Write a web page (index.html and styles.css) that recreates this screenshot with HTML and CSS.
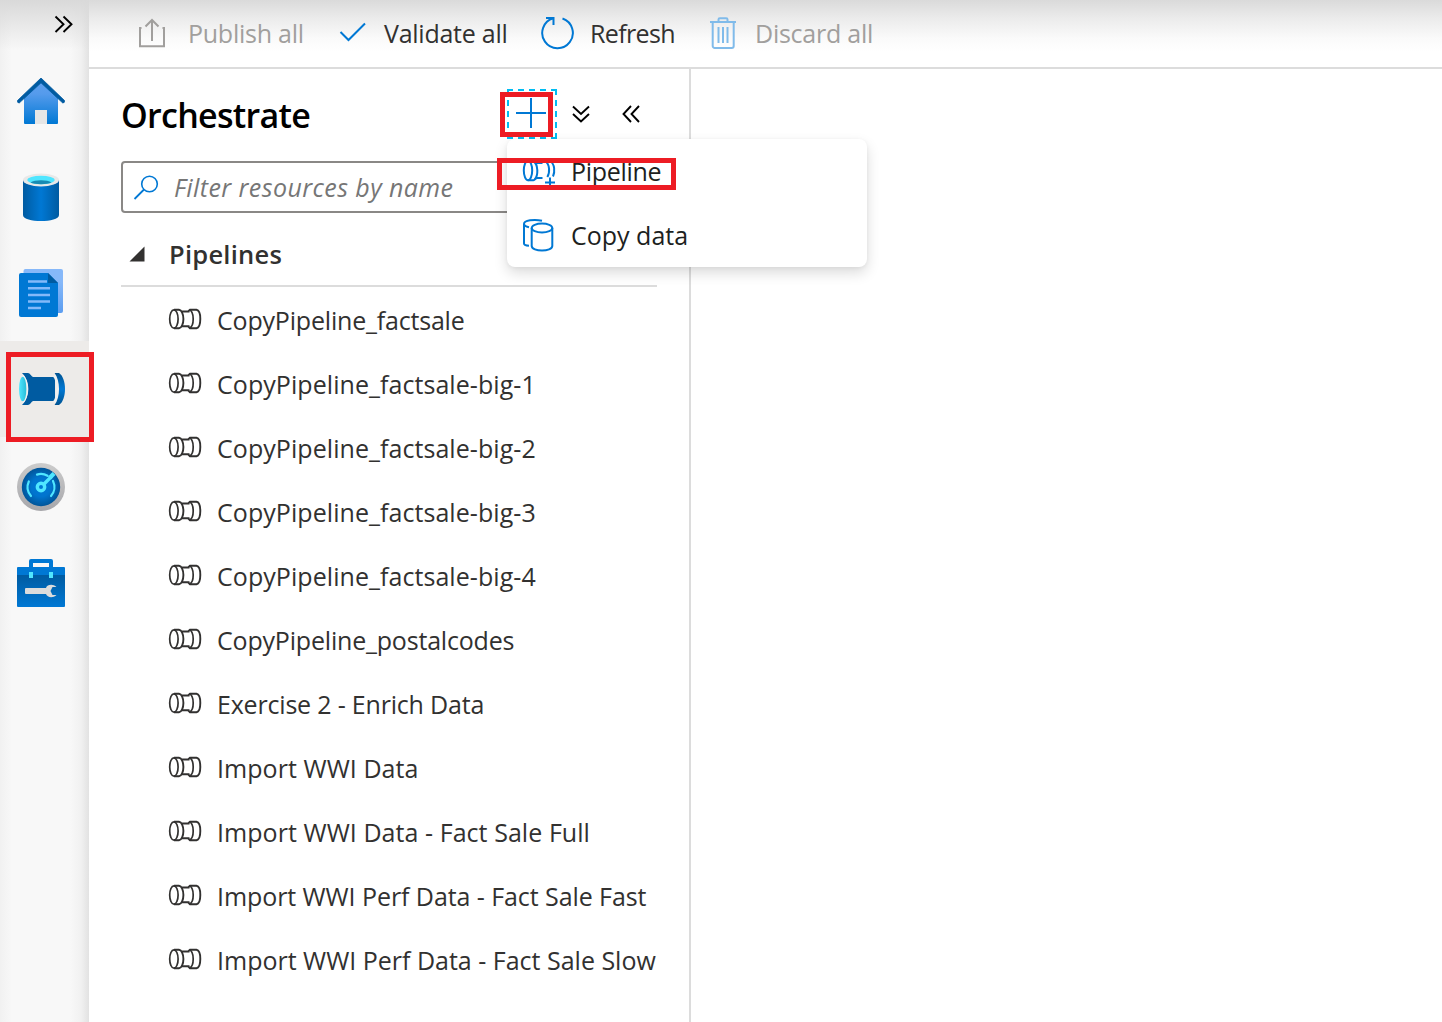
FILE: index.html
```html
<!DOCTYPE html>
<html lang="en">
<head>
<meta charset="utf-8">
<title>Orchestrate</title>
<link rel="stylesheet" href="styles.css">
</head>
<body>
<svg width="0" height="0" class="defs">
  <defs>
    <linearGradient id="house" x1="0" y1="0" x2="0" y2="1"><stop offset="0" stop-color="#5ea0ef"/><stop offset=".3" stop-color="#559bec"/><stop offset="1" stop-color="#0078d4"/></linearGradient>
    <linearGradient id="drum"><stop offset="0" stop-color="#005ba1"/><stop offset=".5" stop-color="#0078d4"/><stop offset="1" stop-color="#005ba1"/></linearGradient>
    <linearGradient id="page" x1="0" y1="0" x2="0" y2="1"><stop offset=".3" stop-color="#86b8f9"/><stop offset="1" stop-color="#5b9df0"/></linearGradient>
    <linearGradient id="ring" x1="0" y1="0" x2="0" y2="1"><stop offset="0" stop-color="#ccc"/><stop offset="1" stop-color="#a6a6aa"/></linearGradient>
    <radialGradient id="dial"><stop offset="0" stop-color="#0078d4"/><stop offset=".5" stop-color="#0074ce"/><stop offset="1" stop-color="#005599"/></radialGradient>
    <linearGradient id="box" x1="0" y1="0" x2="0" y2="1"><stop offset="0" stop-color="#005ba1"/><stop offset="1" stop-color="#0078d4"/></linearGradient>
    <linearGradient id="mouth" x1="0" y1="0" x2="1" y2="0"><stop offset="0" stop-color="#50e6ff"/><stop offset="1" stop-color="#27bdd9"/></linearGradient>
    <linearGradient id="rim" x1="0" y1="0" x2="0" y2="1"><stop offset="0" stop-color="#005392"/><stop offset=".5" stop-color="#0078d4"/><stop offset="1" stop-color="#005392"/></linearGradient>
    <symbol id="pipe" viewBox="0 0 34 22">
      <g fill="none" stroke="currentColor" stroke-width="1.700">
        <ellipse cx="5.900" cy="11" rx="4.200" ry="9.200"/>
        <path d="M6 1.800H11C13.500 2 15.400 6 15.400 11S13.500 20 11 20.200H6" stroke-width="1.900"/>
        <path d="M13.500 3.500H21.500M13.500 18.300H21.500M20 3.500L22 1.800H28.500C31 2.200 32.300 6 32.300 11S31 19.800 28.500 20.200H22L20 18.300" stroke-width="1.900"/>
        <path d="M21.500 1.800C24 3 25.200 7 25.200 11S24 19 21.500 20.200"/>
      </g>
    </symbol>
  </defs>
</svg>
<div class="app">
  <nav class="rail">
    <button class="expand"><svg width="20" height="18" viewBox="0 0 20 18"><path d="M1.500 1.500L9.500 9.300L1.500 17M9.500 1.500L17.500 9.300L9.500 17" fill="none" stroke="#000" stroke-width="1.900"/></svg></button>
    <a class="rail-item home"><svg width="48" height="48" viewBox="0 0 48 48"><path d="M24 3L41 20V45a1 1 0 0 1-1 1H8a1 1 0 0 1-1-1V20z" fill="url(#house)"/><path d="M18 46V32h12v14z" fill="#e6e6e6"/><path d="M0.500 22.500L24 0L47.500 22.500a1.500 1.500 0 0 1-2.800 1.500L24 4.800L3.300 24A1.500 1.500 0 0 1 .5 22.500z" fill="#005ba1" stroke="#005ba1" stroke-width=".8"/></svg></a>
    <a class="rail-item"><svg width="48" height="48" viewBox="0 0 48 48"><path d="M6 7v35c0 8 36 8 36 0V7z" fill="url(#drum)"/><ellipse cx="24" cy="7" rx="18" ry="6.500" fill="#e8e8e8"/><ellipse cx="24" cy="7" rx="13.700" ry="4.200" fill="#50e6ff"/><path d="M13.500 9.500c4-3 17-3 21 0c-4 2.300-17 2.300-21 0z" fill="#198ab3"/></svg></a>
    <a class="rail-item"><svg width="48" height="48" viewBox="0 0 48 48"><rect x="6.500" y="0" width="39.500" height="44" rx="2" fill="url(#page)"/><path d="M4 4H31L41 14V46a2 2 0 0 1-2 2H4a2 2 0 0 1-2-2V6a2 2 0 0 1 2-2z" fill="#0078d4"/><path d="M31 4V14H41z" fill="#005ba1"/><path d="M11 12.500h19M11 19.200h22M11 26h22M11 32.500h22M11 39h13" stroke="#83b9f9" stroke-width="2.400"/></svg></a>
    <a class="rail-item active"><svg width="48" height="48" viewBox="0 0 48 48"><path d="M5 8h6c2 0 3 3 5 4h22V36H16C14 37 13 40 11 40H5C13.500 32 13.500 16 5 8z" fill="#005ba1"/><path d="M5.500 10.500C11.300 16 11.300 32 5.500 37.500" fill="none" stroke="#f2f2f2" stroke-width="2"/><ellipse cx="5.700" cy="24" rx="3.700" ry="12.200" fill="url(#mouth)"/><path d="M36 11.500C40.500 16 40.500 32 36 36.500L40 39C46 32 46 16 40 9z" fill="#f0f0f0"/><path d="M37.600 8h4.400c8 5 8 27 0 32h-4.400C43.500 32 43.500 16 37.600 8z" fill="url(#rim)"/></svg></a>
    <a class="rail-item low"><svg width="48" height="48" viewBox="0 0 48 48"><circle cx="24" cy="24" r="24" fill="url(#ring)"/><circle cx="24" cy="24" r="19.200" fill="url(#dial)"/><g fill="none" stroke="#50e6ff" stroke-width="2.200" stroke-linecap="round"><path d="M14 33A13.600 13.600 0 0 1 11.800 18.500M20 11.600A13 13 0 0 1 30.500 12.800M36 18A13.600 13.600 0 0 1 34 33"/><circle cx="24" cy="24" r="3.700" stroke-width="3.400"/><path d="M27 21L34 14" stroke-width="3.400"/></g><path d="M31 13.500l4.500-4.500 3 3-4.500 4.500z" fill="#50e6ff"/></svg></a>
    <a class="rail-item low"><svg width="48" height="48" viewBox="0 0 48 48"><path d="M14 9V2h20v7" fill="none" stroke="#0078d4" stroke-width="4" stroke-linejoin="round"/><path d="M0 9a1 1 0 0 1 1-1h46a1 1 0 0 1 1 1v8H0z" fill="#0078d4"/><path d="M0 16h48v31a1 1 0 0 1-1 1H1a1 1 0 0 1-1-1z" fill="url(#box)"/><path d="M12 13h4v6h-4zM32 13h4v6h-4z" fill="#50e6ff"/><path d="M9 29h20c1-3.500 7-4.500 10.500-1h-4L33.500 32l2 4h4C36 39.500 30 38.500 29 35H9a1 1 0 0 1-1-1v-4a1 1 0 0 1 1-1z" fill="#dcdcdc"/></svg></a>
  </nav>
  <div class="main">
    <header class="toolbar">
      <button class="cmd publish disabled"><svg width="30" height="34" viewBox="0 0 30 34"><path d="M4.500 12H3V30.200H27V12h-1.500M15 25V4.500M8.500 10.500L15 4L21.500 10.500" fill="none" stroke="#a19f9d" stroke-width="2"/></svg><span>Publish all</span></button>
      <button class="cmd validate"><svg width="28" height="34" viewBox="0 0 28 34"><path d="M1.500 16L9.500 24L26 7.500" fill="none" stroke="#0078d4" stroke-width="2"/></svg><span>Validate all</span></button>
      <button class="cmd refresh"><svg width="34" height="34" viewBox="0 0 34 34"><path d="M12.200 2.300A15.300 15.300 0 1 0 21.500 2.500M5 2H12.500V9" fill="none" stroke="#0078d4" stroke-width="2"/></svg><span>Refresh</span></button>
      <button class="cmd discard disabled"><svg width="28" height="34" viewBox="0 0 28 34"><path d="M1 6H27M9.500 5.500V3.500a1.300 1.300 0 0 1 1.300-1.300h6.400A1.300 1.300 0 0 1 18.500 3.500v2M3.700 6V30a2 2 0 0 0 2 2h17a2 2 0 0 0 2-2V6M9.500 11V27M14 11V27M18.500 11V27" fill="none" stroke="#80bbea" stroke-width="2"/></svg><span>Discard all</span></button>
    </header>
    <div class="workspace">
      <section class="panel">
        <div class="panel-head">
          <h1>Orchestrate</h1>
          <div class="tools">
            <button class="tool add"><svg width="30" height="30" viewBox="0 0 30 30"><path d="M15 0V30M0 15H30" stroke="#0078d4" stroke-width="2"/></svg></button>
            <button class="tool"><svg width="18" height="18" viewBox="0 0 18 18"><path d="M1 1.500L9 9L17 1.500M1 9L9 16.500L17 9" fill="none" stroke="#000" stroke-width="1.900"/></svg></button>
            <button class="tool"><svg width="18" height="18" viewBox="0 0 18 18"><path d="M9 1L1.500 9L9 17M17 1L9.500 9L17 17" fill="none" stroke="#000" stroke-width="1.900"/></svg></button>
          </div>
        </div>
        <div class="search"><svg width="26" height="26" viewBox="0 0 26 26"><circle cx="16.500" cy="10" r="7.800" fill="none" stroke="#0078d4" stroke-width="1.600"/><path d="M11 15.500L1.500 25" stroke="#0078d4" stroke-width="1.800"/></svg><span>Filter resources by name</span></div>
        <div class="group"><svg width="16" height="16" viewBox="0 0 16 16"><path d="M15.500 .5V15.500H.5z" fill="#323130"/></svg><h2>Pipelines</h2></div>
        <ul class="list">
          <li class="tight"><svg class="pipe"><use href="#pipe"/></svg><span>CopyPipeline_factsale</span></li>
          <li class="numbered"><svg class="pipe"><use href="#pipe"/></svg><span>CopyPipeline_factsale-big-1</span></li>
          <li class="numbered"><svg class="pipe"><use href="#pipe"/></svg><span>CopyPipeline_factsale-big-2</span></li>
          <li class="numbered"><svg class="pipe"><use href="#pipe"/></svg><span>CopyPipeline_factsale-big-3</span></li>
          <li class="numbered"><svg class="pipe"><use href="#pipe"/></svg><span>CopyPipeline_factsale-big-4</span></li>
          <li class="tight"><svg class="pipe"><use href="#pipe"/></svg><span>CopyPipeline_postalcodes</span></li>
          <li class="tight"><svg class="pipe"><use href="#pipe"/></svg><span>Exercise 2 - Enrich Data</span></li>
          <li class="numbered"><svg class="pipe"><use href="#pipe"/></svg><span>Import WWI Data</span></li>
          <li class="numbered"><svg class="pipe"><use href="#pipe"/></svg><span>Import WWI Data - Fact Sale Full</span></li>
          <li class="long"><svg class="pipe"><use href="#pipe"/></svg><span>Import WWI Perf Data - Fact Sale Fast</span></li>
          <li><svg class="pipe"><use href="#pipe"/></svg><span>Import WWI Perf Data - Fact Sale Slow</span></li>
        </ul>
      </section>
      <main class="canvas"></main>
    </div>
  </div>
</div>
<div class="menu">
  <div class="menu-item new-pipeline"><svg width="34" height="34" viewBox="0 0 34 34"><g fill="none" stroke="#0078d4" stroke-width="2"><ellipse cx="6" cy="16.500" rx="4.200" ry="9.800"/><path d="M6 26.300h5.500c1.500 0 2-2.300 3.500-2.300h5.500M11 7c5.500 3 5.500 15 1.500 18.500M14.500 9h6M23 7c5 3 5 12 2.300 16M28 7c5 3 5 11 3 15.500M28 23.500v10M23 28.500h10"/></g></svg><span>Pipeline</span></div>
  <div class="menu-item"><svg width="34" height="34" viewBox="0 0 34 34"><g fill="none" stroke="#0078d4" stroke-width="2"><ellipse cx="20" cy="10" rx="10.300" ry="4.500"/><path d="M9.700 10v18c0 6 20.600 6 20.600 0V10M20 2.800C12 .8 2 2.500 2 6v19.500c0 1 1.500 2 5 2.300M2 6c0 1.500 2 2.500 5 3.200"/></g></svg><span>Copy data</span></div>
</div>
<div class="mark mark-rail"></div>
<div class="mark mark-add"></div>
<div class="mark mark-pipeline"></div>
</body>
</html>
```
FILE: styles.css
```css
* { box-sizing: border-box; }
body { margin: 0; background: #fff; color: #323130; font: 25px/34px "Open Sans", "Noto Sans", sans-serif; overflow: hidden; }
button { border: 0; background: none; padding: 0; font: inherit; color: inherit; }
h1, h2, ul { margin: 0; padding: 0; }
svg { display: block; flex: none; }
span { white-space: nowrap; }
.defs { position: absolute; }
.app { display: flex; height: 1022px; }
.rail { width: 89px; flex: none; background: linear-gradient(#d9d9d9, rgba(248,248,248,0) 50px), linear-gradient(90deg, #f1f1f1, #f8f8f8 12px, #f8f8f8 70px, #f1f1f1 81px, #e2e2e2 89px); }
.expand { display: flex; height: 53px; width: 89px; padding: 15px 0 0 54px; }
.rail-item { display: flex; height: 96px; padding: 24px 0 0 17px; }
.rail-item.home { padding-top: 25px; }
.rail-item.low { padding-top: 26px; }
.rail-item.active { background: #edebe9; }
.main { flex: 1; display: flex; flex-direction: column; }
.toolbar { display: flex; align-items: flex-start; height: 69px; padding: 16px 0 0 48px; border-bottom: 2px solid #dcdcdc; background: linear-gradient(#dadada, #ebebeb 18px, #fafafa 38px, #fff 52px); }
.cmd { display: flex; align-items: center; height: 34px; letter-spacing: -.25px; }
.disabled { color: #a19f9d; }
.publish { gap: 21px; width: 202px; }
.validate { gap: 17px; width: 202px; }
.refresh { gap: 15px; width: 168px; letter-spacing: -.65px; }
.discard { gap: 18px; }
.workspace { flex: 1; display: flex; }
.panel { width: 602px; border-right: 2px solid #dcdcdc; padding: 20px 32px 0; }
.canvas { flex: 1; }
.panel-head { display: flex; justify-content: space-between; height: 72px; }
h1 { font-size: 34px; line-height: 52px; font-weight: 600; color: #000; letter-spacing: -.7px; }
.tools { display: flex; }
.tool { display: flex; width: 50px; height: 50px; align-items: center; justify-content: center; padding: 0 2px 1px 0; }
.tool.add { outline: 2px dashed #00bcf2; outline-offset: -2px; padding: 0 2px 2px 0; }
.search { display: flex; align-items: center; gap: 15px; height: 52px; border: 2px solid #8a8886; border-radius: 4px; padding-left: 10px; color: #767676; font-style: italic; letter-spacing: .42px; }
.group { display: flex; align-items: center; gap: 24px; height: 74px; padding: 10px 0 0 8px; border-bottom: 2px solid #dcdcdc; }
h2 { font-size: 25.500px; font-weight: 600; letter-spacing: .25px; }
.list { list-style: none; }
.list li { display: flex; align-items: center; gap: 15px; height: 64px; padding: 2px 0 0 47px; }
.tight { letter-spacing: -.19px; }
.numbered { letter-spacing: .06px; }
.long { letter-spacing: -.07px; }
.pipe { width: 34px; height: 22px; margin-top: -2px; }
.menu { position: absolute; left: 507px; top: 139px; width: 360px; height: 128px; background: #fff; border-radius: 8px; box-shadow: 0 6px 14px rgba(0,0,0,.14), 0 1px 4px rgba(0,0,0,.05); color: #201f1e; }
.menu-item { display: flex; align-items: center; gap: 15px; height: 64px; padding: 0 0 1px 15px; }
.new-pipeline { letter-spacing: -.3px; }
.mark { position: absolute; border: 5px solid #ed1c24; }
.mark-rail { left: 6px; top: 352px; width: 88px; height: 90px; }
.mark-add { left: 500px; top: 92px; width: 53px; height: 45px; }
.mark-pipeline { left: 497px; top: 158px; width: 179px; height: 32px; }
```
